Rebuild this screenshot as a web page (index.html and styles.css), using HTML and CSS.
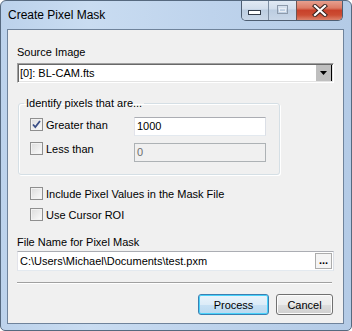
FILE: index.html
```html
<!DOCTYPE html>
<html lang="en">

<head>
    <meta charset="UTF-8">
    <title>Create Pixel Mask</title>
    <link rel="stylesheet" href="styles.css">
</head>

<body>

    <div class="window">
        <div class="titlebar">
            <span class="title">Create Pixel Mask</span>
            <div class="caption-buttons">
                <span class="cap cap-min">
                    <svg width="14" height="6" viewBox="0 0 14 6"><rect x="0.5" y="0.5" width="12" height="4" fill="#fff" stroke="#333c4a"/></svg>
                </span>
                <span class="cap cap-max">
                    <svg width="14" height="12" viewBox="0 0 14 12"><rect x="1.5" y="1.5" width="10" height="8" fill="none" stroke="#8d9aab" stroke-width="1"/><rect x="3.5" y="4.5" width="6" height="3" fill="none" stroke="#e9eef5"/></svg>
                </span>
                <span class="cap cap-close">
                    <svg width="16" height="13" viewBox="0 0 16 13">
                        <path d="M3 2 L13 11 M13 2 L3 11" stroke="#3a2420" stroke-width="4.2" stroke-linecap="square"/>
                        <path d="M3 2 L13 11 M13 2 L3 11" stroke="#fff" stroke-width="2.2" stroke-linecap="square"/>
                    </svg>
                </span>
            </div>
        </div>

        <div class="client">
            <div class="field-label">Source Image</div>
            <div class="combo">
                <span class="combo-text">[0]: BL-CAM.fts</span>
                <span class="combo-btn">
                    <svg width="7" height="5" viewBox="0 0 7 5"><path d="M0 0 H7 L3.5 4 Z" fill="#000"/></svg>
                </span>
            </div>

            <fieldset class="group">
                <legend>Identify pixels that are...</legend>
                <div class="group-body">
                    <div class="checks">
                        <div class="check">
                            <span class="box">
                                <svg width="11" height="11" viewBox="0 0 11 11"><path d="M2 5.5 L4.3 8 L9 2" fill="none" stroke="#3b4f86" stroke-width="1.8"/></svg>
                            </span>
                            <span class="check-text">Greater than</span>
                        </div>
                        <div class="check">
                            <span class="box"></span>
                            <span class="check-text">Less than</span>
                        </div>
                    </div>
                    <div class="inputs">
                        <div class="textbox">1000</div>
                        <div class="textbox disabled">0</div>
                    </div>
                </div>
            </fieldset>

            <div class="options">
                <div class="check">
                    <span class="box"></span>
                    <span class="check-text">Include Pixel Values in the Mask File</span>
                </div>
                <div class="check">
                    <span class="box"></span>
                    <span class="check-text">Use Cursor ROI</span>
                </div>
            </div>

            <div class="field-label file-label">File Name for Pixel Mask</div>
            <div class="textbox file">
                <span>C:\Users\Michael\Documents\test.pxm</span>
                <span class="browse">...</span>
            </div>

            <div class="separator"></div>

            <div class="buttons">
                <span class="btn default">Process</span>
                <span class="btn">Cancel</span>
            </div>
        </div>
    </div>

</body>

</html>
```

FILE: styles.css
```css
body {
    margin: 0;
    font-family: "Liberation Sans", Arial, sans-serif;
    font-size: 11px;
    color: #000;
    background-color: #fff;
}

.window {
    width: 352px;
    height: 331px;
    box-sizing: border-box;
    display: flex;
    flex-direction: column;
    border: 1px solid #56697f;
    border-radius: 6px 6px 5px 5px;
    padding: 0 7px 6px 6px;
    background: linear-gradient(to right, #bcd2eb 0%, #c9dcf1 25%, #bed3ec 60%, #b4cbe6 100%);
    overflow: hidden;
}

.titlebar {
    height: 28px;
    display: flex;
    justify-content: space-between;
    align-items: flex-start;
    flex-shrink: 0;
}

.title {
    font-size: 12px;
    line-height: 14px;
    margin-top: 7px;
    margin-left: 1px;
    color: #000;
}

.caption-buttons {
    display: flex;
    margin-top: -1px;
    margin-right: 1px;
    height: 20px;
    border: 1px solid #4e5e72;
    border-top: none;
    border-radius: 0 0 5px 5px;
    overflow: hidden;
}

.cap {
    display: flex;
    align-items: center;
    justify-content: center;
    height: 100%;
    background: linear-gradient(#e3ebf5 0%, #d2deec 45%, #bccde1 50%, #c9d7e8 100%);
}

.cap-min {
    width: 27px;
    border-right: 1px solid #7e8ea2;
    align-items: flex-end;
    box-sizing: border-box;
    padding-bottom: 4px;
}

.cap-max {
    width: 28px;
    border-right: 1px solid #6e5552;
    box-sizing: border-box;
}

.cap-close {
    width: 45px;
    background: linear-gradient(#e8a595 0%, #dc7b65 40%, #c8412a 52%, #cc4d33 75%, #dc826b 100%);
}

.client {
    flex: 1;
    background-color: #f0f0f0;
    border: 1px solid #6f839b;
    padding: 16px 9px 0 9px;
}

.field-label {
    line-height: 13px;
}

.combo {
    margin-top: 4px;
    height: 20px;
    box-sizing: border-box;
    display: flex;
    align-items: center;
    justify-content: space-between;
    background-color: #fff;
    border: 1px solid;
    border-color: #a0a0a0 #fff #fff #a0a0a0;
    box-shadow: inset 1px 1px 0 #696969, inset -1px -1px 0 #e3e3e3;
    padding: 1px 1px 1px 2px;
}

.combo-btn {
    width: 15px;
    height: 16px;
    display: flex;
    align-items: center;
    justify-content: center;
    background-color: #bfbfbf;
    border-right: 1px solid #000;
}

.group {
    margin: 14px 0 0 1px;
    width: 262px;
    box-sizing: border-box;
    border: 1px solid #d5dfe5;
    border-radius: 3px;
    box-shadow: inset 1px 1px 0 #fff, 1px 1px 0 #fff;
    padding: 7px 13px 12px 0;
}

.group legend {
    padding: 0 2px;
    margin-left: 5px;
    line-height: 13px;
}

.group-body {
    display: flex;
    justify-content: space-between;
    padding-left: 11px;
}

.checks {
    display: flex;
    flex-direction: column;
    gap: 11px;
    padding-top: 1px;
}

.inputs {
    display: flex;
    flex-direction: column;
    gap: 7px;
}

.check {
    display: flex;
    align-items: flex-start;
    height: 13px;
}

.check-text {
    margin-left: 3px;
    line-height: 13px;
    margin-top: 1px;
}

.box {
    width: 13px;
    height: 13px;
    box-sizing: border-box;
    border: 1px solid #8f8f8f;
    background: linear-gradient(135deg, #dcdcdc, #fbfbfb);
    box-shadow: inset 0 0 0 1px #f2f2f2;
    display: flex;
    align-items: center;
    justify-content: center;
}

.textbox {
    box-sizing: border-box;
    height: 19px;
    width: 132px;
    background-color: #fff;
    border: 1px solid;
    border-color: #abadb3 #dbdfe6 #e3e9ef #e2e3ea;
    padding: 0 2px;
    line-height: 17px;
}

.textbox.disabled {
    background-color: #f0f0f0;
    border-color: #adb2b5;
    color: #6d6d6d;
}

.options {
    margin-top: 12px;
    margin-left: 13px;
    display: flex;
    flex-direction: column;
    gap: 8px;
}

.file-label {
    margin-top: 15px;
}

.textbox.file {
    margin-top: 2px;
    width: auto;
    height: 20px;
    display: flex;
    justify-content: space-between;
    align-items: center;
    padding: 0 0 0 2px;
}

.browse {
    width: 17px;
    height: 16px;
    box-sizing: border-box;
    border: 1px solid #acacac;
    background-color: #f4f4f4;
    font-weight: bold;
    text-align: center;
    line-height: 12px;
    margin-right: 1px;
}

.separator {
    margin-top: 11px;
    margin-right: 2px;
    height: 1px;
    background-color: #a0a0a0;
    border-bottom: 1px solid #fff;
}

.buttons {
    margin-top: 10px;
    display: flex;
    justify-content: flex-end;
    gap: 7px;
    padding-right: 1px;
}

.btn {
    box-sizing: border-box;
    height: 21px;
    min-width: 57px;
    padding: 0 6px;
    display: flex;
    align-items: center;
    justify-content: center;
    border: 1px solid #707070;
    border-radius: 3px;
    background: linear-gradient(#f2f2f2 0%, #ebebeb 50%, #dddddd 51%, #cfcfcf 100%);
    box-shadow: inset 0 0 0 1px #fcfcfc;
}

.btn.default {
    width: 71px;
    border-color: #3c7fb1;
    background: linear-gradient(#eaf4fb 0%, #dcecf8 50%, #c7e1f4 51%, #b9d9f0 100%);
    box-shadow: inset 0 0 0 1px #48d2fb;
}
```
